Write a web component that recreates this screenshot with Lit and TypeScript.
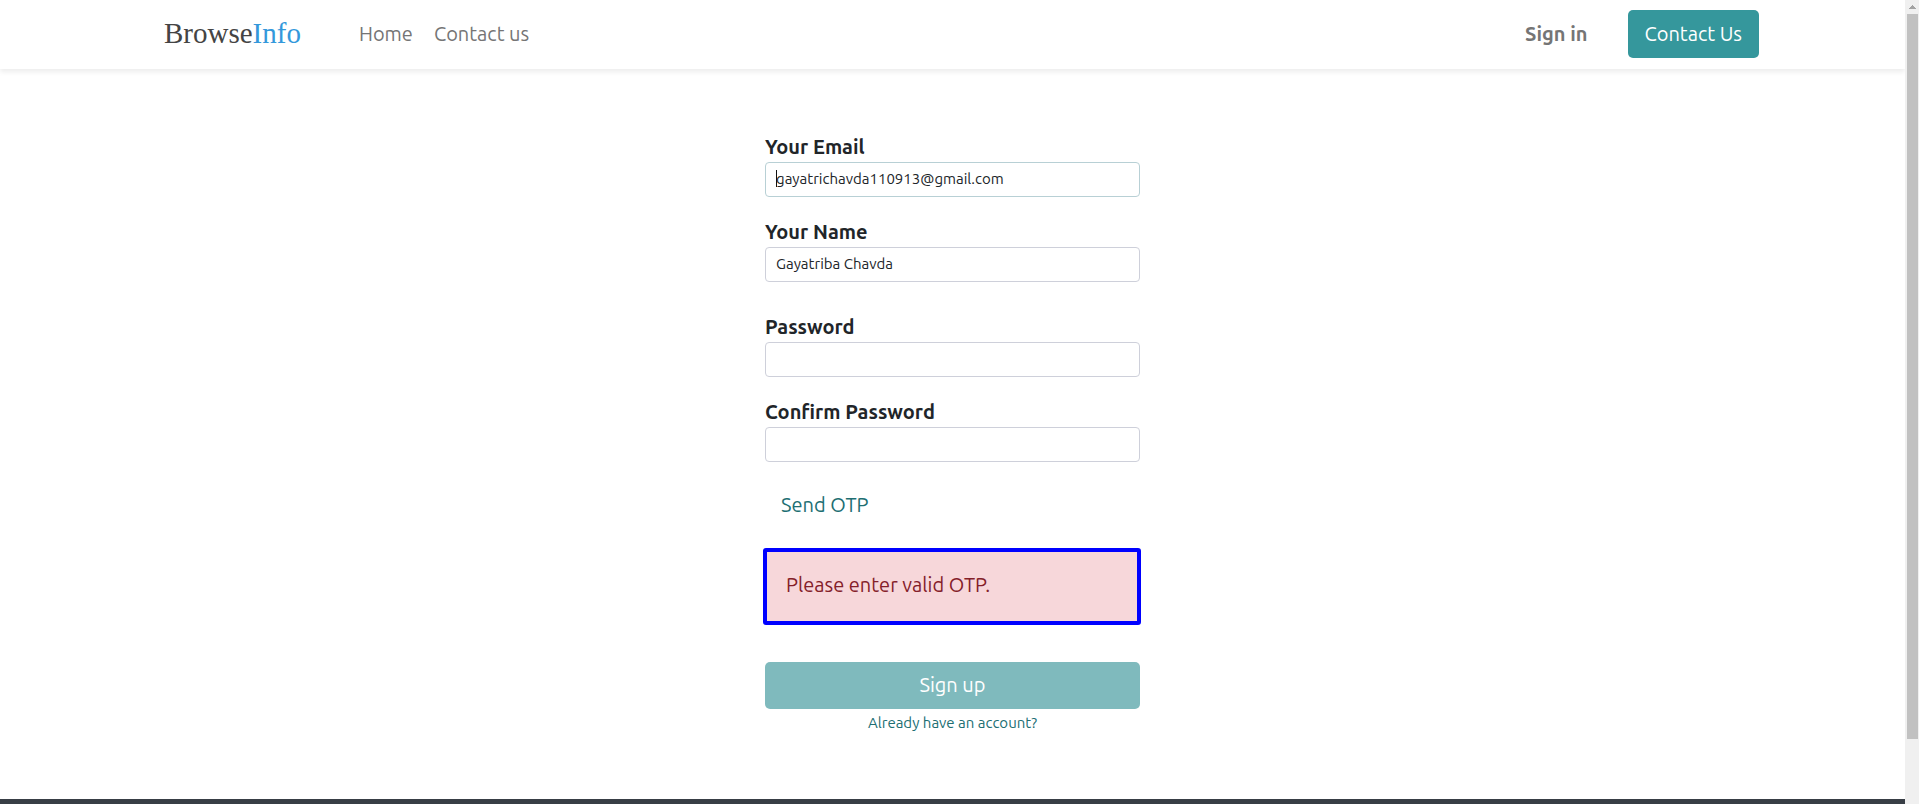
import { LitElement, html, css } from "lit";
import { customElement } from "lit/decorators.js";

@customElement("site-header")
class SiteHeader extends LitElement {
  static styles = css`
    :host {
      display: block;
      position: relative;
      background: #fff;
      box-shadow: 0 3px 5px rgba(0, 0, 0, 0.075);
    }
    .bar {
      display: flex;
      align-items: center;
      box-sizing: border-box;
      max-width: 1613px;
      height: 69px;
      margin: 0 auto;
      padding: 0 0 2px 18px;
    }
    a {
      text-decoration: none;
      color: #757575;
      line-height: 30px;
    }
    .logo {
      margin-right: 58px;
      padding-bottom: 2px;
      font: 29px/34px "Liberation Serif", serif;
      color: #444;
    }
    .logo-accent {
      color: #3498db;
    }
    nav {
      display: flex;
      flex: 1;
      gap: 21px;
    }
    .sign-in {
      margin-right: 41px;
      font-weight: 700;
    }
    .contact {
      padding: 9px 17px 9px 16px;
      border-radius: 5px;
      background: #35979c;
      color: #fff;
    }
  `;

  render() {
    return html`
      <header class="bar">
        <a class="logo" href="#">Browse<span class="logo-accent">Info</span></a>
        <nav>
          <a href="#">Home</a>
          <a href="#">Contact us</a>
        </nav>
        <a class="sign-in" href="#">Sign in</a>
        <a class="contact" href="#">Contact Us</a>
      </header>
    `;
  }
}

@customElement("signup-form")
class SignupForm extends LitElement {
  static styles = css`
    :host {
      display: block;
      width: 375px;
      max-width: 100%;
      margin: 0 auto;
    }
    .field {
      margin-bottom: 20px;
    }
    .field.spaced {
      margin-top: 30px;
    }
    label {
      display: block;
      font-weight: 700;
      line-height: 30px;
    }
    .input-wrap {
      position: relative;
    }
    input {
      display: block;
      box-sizing: border-box;
      width: 100%;
      height: 35px;
      padding: 0 10px 2px;
      border: 1px solid #ced0da;
      border-radius: 4px;
      background: #fff;
      color: #212529;
      font-family: inherit;
      font-size: 15px;
    }
    .active input {
      border-color: #b8d0d5;
    }
    .caret {
      position: absolute;
      left: 11px;
      top: 8px;
      width: 1px;
      height: 17px;
      background: #111;
    }
    button {
      height: 47px;
      border: 0;
      border-radius: 5px;
      font: inherit;
      line-height: 30px;
    }
    .send {
      display: block;
      padding: 0 16px 2px;
      background: none;
      color: #206e72;
    }
    .alert {
      margin: 19px -1px 37px -2px;
      padding: 18px 19px 21px;
      border: 4px solid #00f;
      border-radius: 3px;
      background: #f7d7da;
      color: #842029;
      line-height: 30px;
    }
    .submit {
      display: block;
      width: 100%;
      padding: 0 16px 2px;
      background: #7fbabd;
      color: #fff;
    }
    .login {
      display: block;
      text-align: center;
      text-decoration: none;
      font-size: 15px;
      line-height: 28px;
      color: #206e72;
    }
  `;

  render() {
    return html`
      <form>
        <div class="field active">
          <label for="email">Your Email</label>
          <div class="input-wrap">
            <input id="email" type="text" value="gayatrichavda110913@gmail.com" />
            <span class="caret"></span>
          </div>
        </div>
        <div class="field">
          <label for="name">Your Name</label>
          <input id="name" type="text" value="Gayatriba Chavda" />
        </div>
        <div class="field spaced">
          <label for="password">Password</label>
          <input id="password" type="password" />
        </div>
        <div class="field">
          <label for="confirm">Confirm Password</label>
          <input id="confirm" type="password" />
        </div>
        <button class="send" type="button">Send OTP</button>
        <div class="alert" role="alert">Please enter valid OTP.</div>
        <button class="submit" type="button">Sign up</button>
        <a class="login" href="#">Already have an account?</a>
      </form>
    `;
  }
}

@customElement("app-root")
class AppRoot extends LitElement {
  static styles = css`
    :host {
      display: grid;
      grid-template-columns: minmax(0, 1fr) 14px;
      height: 100vh;
      overflow: hidden;
      background: #fff;
      color: #212529;
      font-family: Ubuntu, "Noto Sans", sans-serif;
      font-size: 20px;
    }
    .page {
      display: flex;
      flex-direction: column;
      overflow: hidden;
    }
    main {
      flex: 1;
      padding-top: 63px;
    }
    footer {
      height: 5px;
      background: #383e45;
    }
    .scrollbar {
      display: flex;
      flex-direction: column;
      padding: 0 1px 0 2px;
      background: #f0f0f0;
    }
    .arrow {
      display: block;
      width: 11px;
      height: 14px;
    }
    .thumb {
      height: 90.2%;
      background: #c1c1c1;
    }
  `;

  render() {
    return html`
      <div class="page">
        <site-header></site-header>
        <main><signup-form></signup-form></main>
        <footer></footer>
      </div>
      <div class="scrollbar">
        <svg class="arrow" viewBox="0 0 11 14" shape-rendering="crispEdges">
          <path d="M5 5h1v1h1v1h1v1h1v1H2V8h1V7h1V6h1z" fill="#a3a3a3" />
        </svg>
        <div class="thumb"></div>
      </div>
    `;
  }
}
